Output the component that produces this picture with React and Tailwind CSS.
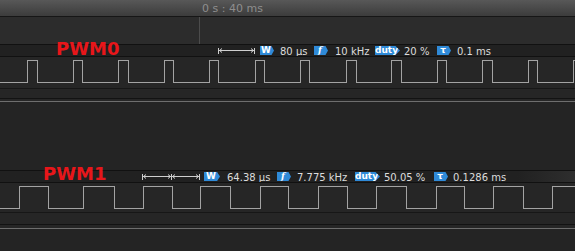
import React from "react";

const PWM0_EDGES = [27, 37, 73, 82, 118, 128, 164, 173, 209, 218, 255, 264, 300, 309, 346, 356, 391, 401, 437, 446, 482, 492, 528, 537, 573];
const PWM1_EDGES = [19, 48, 83, 114, 143, 172, 200, 230, 260, 288, 318, 347, 376, 406, 436, 464, 493, 523, 552];

function Wave({ edges, height, high, low }) {
  let d = `M0 ${low + 0.5}`;
  let level = false;
  edges.forEach((x) => {
    d += ` H${x + 0.5} V${(level ? low : high) + 0.5}`;
    level = !level;
  });
  d += " H575";
  return (
    <svg width="575" height={height} className="block" shapeRendering="crispEdges">
      <path d={d} fill="none" stroke="#a3a3a3" strokeWidth="1" />
    </svg>
  );
}

function Badge({ children, w = "w-[14px]", italic }) {
  return (
    <span
      className={[
        "mt-[1px] flex h-[9px] items-center justify-center bg-[#2f8ad8] pr-[2px] text-[9px] font-bold leading-none text-white [clip-path:polygon(0_0,82%_0,100%_50%,82%_100%,0_100%)]",
        w,
        italic ? "italic font-['DejaVu_Serif',serif]" : "",
      ].join(" ")}
    >
      {children}
    </span>
  );
}

function Value({ w, children }) {
  return (
    <span className={["mt-[2px] text-[10px] leading-none whitespace-nowrap text-[#dcdcdc]", w].join(" ")}>
      {children}
    </span>
  );
}

function Arrow({ width, ticks }) {
  const y = 5.5;
  return (
    <svg width={width} height="11" className="block" shapeRendering="crispEdges">
      {ticks.map((t, i) => (
        <line key={i} x1={t + 0.5} x2={t + 0.5} y1="3" y2="9" stroke="#cfcfcf" />
      ))}
      {ticks.slice(1).map((t, i) => {
        const a = ticks[i];
        return (
          <g key={i} stroke="#cfcfcf" fill="none">
            <line x1={a + 1} x2={t} y1={y} y2={y} />
            <path d={`M${a + 4} ${y - 2} L${a + 1.5} ${y} L${a + 4} ${y + 2}`} shapeRendering="auto" />
            <path d={`M${t - 3} ${y - 2} L${t - 0.5} ${y} L${t - 3} ${y + 2}`} shapeRendering="auto" />
          </g>
        );
      })}
    </svg>
  );
}

function Label({ children, pad, w, top }) {
  return (
    <span
      className={[
        "relative whitespace-nowrap text-[18px] font-bold leading-none text-[#e8161a] font-['DejaVu_Sans',sans-serif]",
        pad,
        w,
        top,
      ].join(" ")}
    >
      {children}
    </span>
  );
}

export default function App() {
  return (
    <div className="flex h-[251px] w-[575px] flex-col overflow-hidden bg-[#262626] font-['DejaVu_Sans',sans-serif]">
      {/* time header */}
      <div className="h-[16px] bg-linear-to-b from-[#585858] to-[#3c3c3c] pl-[202px] pt-[3px] text-[11px] leading-none text-[#8e8e8e]">
        0 s : 40 ms
      </div>
      <div className="h-px bg-[#161616]" />
      <div className="flex h-[27px] bg-[#2c2c2c]">
        <div className="ml-[199px] w-px bg-[#4c4c4c]" />
      </div>

      {/* PWM0 */}
      <div className="h-px bg-[#111]" />
      <div className="flex h-[11px] bg-[#212121]">
        <Label pad="ml-[56px]" w="w-[162px]" top="-top-[5px]">PWM0</Label>
        <span className="w-[42px]">
          <Arrow width={37} ticks={[0, 36]} />
        </span>
        <span className="flex w-[20px]">
          <Badge>W</Badge>
        </span>
        <Value w="w-[34px]">80 µs</Value>
        <span className="flex w-[21px]">
          <Badge italic>f</Badge>
        </span>
        <Value w="w-[40px]">10 kHz</Value>
        <span className="flex w-[29px]">
          <Badge w="w-[25px]">duty</Badge>
        </span>
        <Value w="w-[33px]">20 %</Value>
        <span className="flex w-[20px]">
          <Badge>τ</Badge>
        </span>
        <Value>0.1 ms</Value>
      </div>
      <div className="h-px bg-[#111]" />
      <div className="h-[31px]">
        <Wave edges={PWM0_EDGES} height={31} high={3} low={25} />
      </div>
      <div className="h-px bg-[#171717]" />
      <div className="h-[9px]" />
      <div className="h-px bg-[#131313]" />
      <div className="h-[2px]" />
      <div className="h-px bg-[#6e6e6e]" />
      <div className="h-[68px] bg-[#242424]" />

      {/* PWM1 */}
      <div className="h-px bg-[#111]" />
      <div className="flex h-[11px] bg-linear-to-r from-[#212121] from-90% to-[#2e2e2e]">
        <Label pad="ml-[43px]" w="w-[99px]" top="-top-[6px]">PWM1</Label>
        <span className="w-[62px]">
          <Arrow width={58} ticks={[0, 29, 57]} />
        </span>
        <span className="flex w-[23px]">
          <Badge w="w-[16px]">W</Badge>
        </span>
        <Value w="w-[50px]">64.38 µs</Value>
        <span className="flex w-[20px]">
          <Badge italic>f</Badge>
        </span>
        <Value w="w-[58px]">7.775 kHz</Value>
        <span className="flex w-[29px]">
          <Badge w="w-[25px]">duty</Badge>
        </span>
        <Value w="w-[50px]">50.05 %</Value>
        <span className="flex w-[19px]">
          <Badge>τ</Badge>
        </span>
        <Value>0.1286 ms</Value>
      </div>
      <div className="h-px bg-[#111]" />
      <div className="h-[29px]">
        <Wave edges={PWM1_EDGES} height={29} high={3} low={25} />
      </div>
      <div className="h-px bg-[#171717]" />
      <div className="h-[11px]" />
      <div className="h-px bg-[#131313]" />
      <div className="h-[3px]" />
      <div className="h-px bg-[#6e6e6e]" />
      <div className="flex-1 bg-[#242424]" />
    </div>
  );
}
